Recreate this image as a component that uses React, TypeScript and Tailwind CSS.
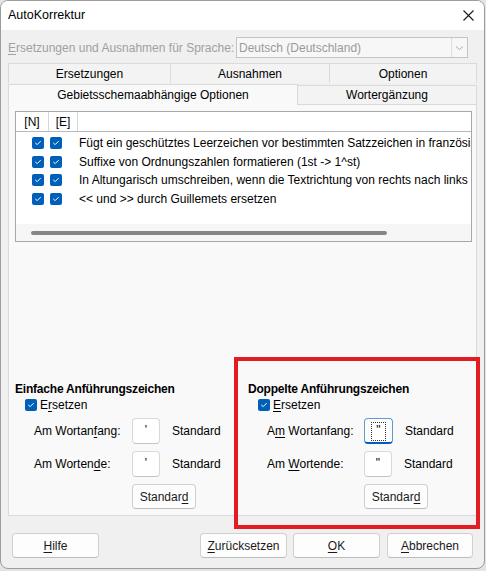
import React from "react"

const Check = () => (
    <span className="inline-flex w-[12px] h-[12px] rounded-[2px] bg-[#005fb8] items-center justify-center shrink-0">
        <svg width="8" height="8" viewBox="0 0 8 8">
            <path d="M1.6 4.2 L3.2 5.6 L6.4 2.4" fill="none" stroke="white" strokeWidth="1" strokeLinecap="round" strokeLinejoin="round" />
        </svg>
    </span>
)

const U = ({ children }: { children: React.ReactNode }) => (
    <span className="underline underline-offset-2 decoration-1">{children}</span>
)

type BtnProps = { children: React.ReactNode, className?: string }

const Button = ({ children, className = "" }: BtnProps) => (
    <div className={`h-[25px] shrink-0 flex items-center justify-center bg-[#fdfdfd] border border-[#d0d0d0] border-b-[#bcbcbc] rounded-[4px] text-[#1a1a1a] ${className}`}>
        {children}
    </div>
)

const QuoteBox = ({ char, focused = false }: { char: string, focused?: boolean }) => (
    focused ? (
        <div className="w-[29px] h-[26px] shrink-0 bg-white rounded-[4px] border border-[#5c9ad8] border-b-2 border-b-[#005fb8] flex justify-center pt-[3px]">
            <span className="w-[15px] h-[19px] border border-dotted border-[#333] flex justify-center leading-[14px]">{char}</span>
        </div>
    ) : (
        <div className="w-[28px] h-[26px] shrink-0 bg-white rounded-[4px] border border-[#d8d8d8] border-b-[#c4c4c4] flex justify-center pt-[4px] leading-[14px]">
            {char}
        </div>
    )
)

type GroupProps = {
    title: string,
    ersetzen: React.ReactNode,
    anfang: React.ReactNode,
    ende: React.ReactNode,
    char: string,
    focused?: boolean,
    pad: string
}

const QuoteGroup = ({ title, ersetzen, anfang, ende, char, focused, pad }: GroupProps) => (
    <div className="w-[233px] shrink-0 flex flex-col">
        <div className="h-[16px] leading-[16px] font-bold tracking-[-0.2px] whitespace-nowrap">{title}</div>
        <div className="h-[16px] flex items-center gap-[3px] pl-[10px]">
            <Check />
            <span className="leading-[16px]">{ersetzen}</span>
        </div>
        <div className="flex items-center mt-[5px]">
            <span className="pl-[19px] shrink-0 whitespace-nowrap" style={{ width: pad }}>{anfang}</span>
            <QuoteBox char={char} focused={focused} />
            <span className="ml-[12px]">Standard</span>
        </div>
        <div className="flex items-center mt-[7px]">
            <span className="pl-[19px] shrink-0 whitespace-nowrap" style={{ width: pad }}>{ende}</span>
            <QuoteBox char={char} />
            <span className="ml-[12px]">Standard</span>
        </div>
        <div className="flex mt-[7px]" style={{ paddingLeft: pad }}>
            <Button className="w-[64px]">Standar<U>d</U></Button>
        </div>
    </div>
)

const rows = [
    "Fügt ein geschütztes Leerzeichen vor bestimmten Satzzeichen in französischem Text ein",
    "Suffixe von Ordnungszahlen formatieren (1st -> 1^st)",
    "In Altungarisch umschreiben, wenn die Textrichtung von rechts nach links ist",
    "<< und >> durch Guillemets ersetzen",
]

const App = () => {
    return (
        <div className="relative w-[486px] h-[571px] bg-[#e4e4e4] font-['Liberation_Sans',Arial,sans-serif] text-[12px] text-black">
            <div className="w-[485px] h-[569px] rounded-[8px] border border-[#9c9c9c] bg-[#f0f0f0] overflow-hidden flex flex-col">

                {/* title bar */}
                <div className="h-[29px] bg-white flex items-center justify-between pl-[7px] pr-[10px]">
                    <span className="text-[12.5px]">AutoKorrektur</span>
                    <svg width="11" height="11" viewBox="0 0 11 11">
                        <path d="M0.5 0.5 L10.5 10.5 M10.5 0.5 L0.5 10.5" stroke="#1a1a1a" strokeWidth="1.1" />
                    </svg>
                </div>

                {/* language row */}
                <div className="flex items-center pt-[7px] pl-[7px]">
                    <span className="w-[228px] shrink-0 text-[#a0a0a0]"><U>E</U>rsetzungen und Ausnahmen für Sprache:</span>
                    <div className="w-[232px] h-[21px] shrink-0 border border-[#c4c4c4] bg-[#f7f7f7] flex items-center">
                        <span className="flex-1 pl-[2px] text-[#9a9a9a]">Deutsch (Deutschland)</span>
                        <div className="w-[16px] h-full border-l border-[#dedede] flex items-center justify-center">
                            <svg width="9" height="6" viewBox="0 0 9 6">
                                <path d="M1 1.5 L4.5 4.5 L8 1.5" fill="none" stroke="#b0b0b0" strokeWidth="1" />
                            </svg>
                        </div>
                    </div>
                </div>

                {/* tabs */}
                <div className="ml-[7px] mt-[5px] w-[469px]">
                    <div className="flex h-[20px]">
                        <div className="w-[163px] border border-[#dadada] border-b-0 bg-[#f3f3f3] flex items-center justify-center">Ersetzungen</div>
                        <div className="w-[159px] border-t border-r border-[#dadada] bg-[#f3f3f3] flex items-center justify-center">Ausnahmen</div>
                        <div className="w-[147px] border-t border-r border-[#dadada] bg-[#f3f3f3] flex items-center justify-center">Optionen</div>
                    </div>
                    <div className="flex h-[21px] items-end">
                        <div className="w-[290px] h-[21px] border border-b-0 border-[#dadada] bg-[#f9f9f9] flex items-center justify-center relative z-10 -mb-px pb-px">Gebietsschemaabhängige Optionen</div>
                        <div className="w-[179px] h-[19px] border-t border-r border-[#dadada] bg-[#f3f3f3] flex items-center justify-center">Wortergänzung</div>
                    </div>

                    {/* panel */}
                    <div className="h-[412px] border border-[#dadada] bg-[#f9f9f9] px-[6px] pt-[6px] flex flex-col">
                        <div className="w-[457px] h-[131px] shrink-0 border border-[#a8a8a8] bg-white flex flex-col overflow-hidden">
                            <div className="flex h-[20px] shrink-0 border-b border-[#b8b8b8]">
                                <div className="w-[33px] shrink-0 border-r border-[#d6d6d6] flex items-center justify-center">[N]</div>
                                <div className="w-[29px] shrink-0 border-r border-[#d6d6d6] flex items-center justify-center">[E]</div>
                                <div className="flex-1" />
                            </div>
                            <div className="flex-1 flex flex-col pt-[2px] overflow-hidden">
                                {rows.map((text, i) => (
                                    <div key={i} className="h-[18.5px] shrink-0 flex items-center whitespace-nowrap">
                                        <div className="w-[33px] shrink-0 flex justify-end pr-[5px]"><Check /></div>
                                        <div className="w-[29px] shrink-0 flex pl-[1px]"><Check /></div>
                                        <span className="ml-[1px]">{text}</span>
                                    </div>
                                ))}
                            </div>
                            <div className="h-[17px] shrink-0 bg-[#f6f6f6] flex items-center pl-[15px]">
                                <div className="w-[356px] h-[4px] rounded-full bg-[#858585]" />
                            </div>
                        </div>

                        <div className="flex mt-[139px]">
                            <QuoteGroup
                                title="Einfache Anführungszeichen"
                                ersetzen={<>E<U>r</U>setzen</>}
                                anfang={<>Am Wortan<U>f</U>ang:</>}
                                ende={<>Am Worten<U>d</U>e:</>}
                                char="'"
                                pad="117px"
                            />
                            <QuoteGroup
                                title="Doppelte Anführungszeichen"
                                ersetzen={<><U>E</U>rsetzen</>}
                                anfang={<>A<U>m</U> Wortanfang:</>}
                                ende={<>Am <U>W</U>ortende:</>}
                                char={'"'}
                                focused
                                pad="116px"
                            />
                        </div>
                    </div>
                </div>

                {/* bottom buttons */}
                <div className="flex mt-[17px] pl-[11px]">
                    <Button className="w-[87px]"><U>H</U>ilfe</Button>
                    <Button className="w-[87px] ml-[101px]"><U>Z</U>urücksetzen</Button>
                    <Button className="w-[87px] ml-[6px]"><U>O</U>K</Button>
                    <Button className="w-[86px] ml-[7px]"><U>A</U>bbrechen</Button>
                </div>
            </div>

            {/* red highlight annotation */}
            <div className="absolute left-[234px] top-[357px] w-[246px] h-[172px] border-4 border-[#e31b23]" />
        </div>
    )
}

export default App
